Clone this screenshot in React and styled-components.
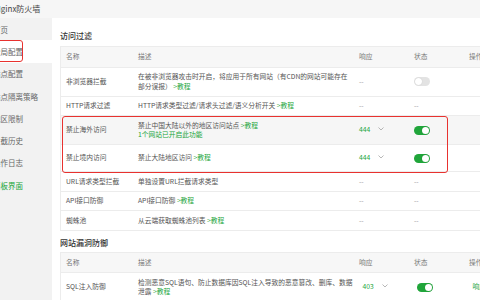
import React from "react";
import styled, { createGlobalStyle, css } from "styled-components";

const GREEN = "#20a53a";

const Global = createGlobalStyle`
  html, body { margin: 0; padding: 0; }
  body {
    width: 480px; height: 300px; overflow: hidden; background: #fff;
    font-family: "Noto Sans CJK SC", "Noto Sans", "Liberation Sans", sans-serif;
  }
`;

const Page = styled.div`
  width: 480px; height: 300px; overflow: hidden;
  display: flex; flex-direction: column;
`;

const TopBar = styled.div`
  height: 18px; flex: none; background: #f6f6f6;
  display: flex; align-items: center; padding-bottom: 1px; box-sizing: border-box;
  overflow: hidden;
`;

const Brand = styled.span`
  margin-left: -5px; font-size: 8px; color: #444; white-space: nowrap;
`;

const Body = styled.div`
  flex: 1; display: flex; min-height: 0;
`;

const Sidebar = styled.nav`
  width: 52px; flex: none; background: #f2f2f2; overflow: hidden;
  display: flex; flex-direction: column;
`;

const NavItem = styled.div`
  position: relative;
  height: 22.3px; flex: none; display: flex; align-items: center;
  font-size: 7.5px; white-space: nowrap;
  color: ${(p) => (p.$accent ? GREEN : "#666")};
  background: ${(p) => (p.$active ? "#fff" : "transparent")};
`;

const NavText = styled.span`
  margin-left: -7px;
`;

const Mark = styled.span`
  position: absolute; left: -10px; top: 0; width: 33px; height: 22px;
  border: 1.5px solid #e8322f; border-radius: 3px; pointer-events: none;
  box-sizing: border-box;
`;

const Main = styled.main`
  flex: 1; min-width: 0; overflow: hidden; background: #fff;
  padding: 12px 0 0 8px; box-sizing: border-box;
`;

const SectionTitle = styled.div`
  font-size: 8px; line-height: 12px; color: #333; font-weight: 500;
  margin: ${(p) => (p.$first ? "0 0 4px" : "6px 0 3px")};
`;

const Table = styled.div`
  width: 540px; border: 1px solid #ececec; border-bottom: none; box-sizing: border-box;
`;

const Row = styled.div`
  display: flex;
  align-items: center;
  border-bottom: 1px solid #ececec;
  box-sizing: border-box;
  background: ${(p) => (p.$shade ? "#f6f6f6" : "#fff")};
  ${(p) =>
    p.$head &&
    css`
      background: #f7f7f7;
      min-height: 20.5px;
    `}
`;

const widths = { name: 72, desc: 221, resp: 55, state: 55 };

const Cell = styled.div`
  flex: ${(p) => (p.$col && widths[p.$col] ? `0 0 ${widths[p.$col]}px` : "1 1 auto")};
  box-sizing: border-box;
  padding: 4.5px 5px;
  font-size: 6.75px; line-height: 9.5px;
  color: ${(p) => (p.$muted ? "#999" : p.$head ? "#777" : "#555")};
  white-space: nowrap;
  overflow: visible;
`;

const Link = styled.span`
  color: ${GREEN};
`;

const Group = styled.div`
  position: relative;
  &::after {
    content: "";
    position: absolute; left: 1px; top: 0; bottom: -1px; width: 386px;
    border: 1.5px solid #e8322f; border-radius: 3px;
    pointer-events: none; box-sizing: border-box;
  }
`;

const Select = styled.div`
  height: 17px; display: flex; align-items: center; gap: 8px;
  color: ${GREEN}; font-size: 6.75px;
`;

const Toggle = styled.span`
  display: inline-block; position: relative;
  width: 16px; height: 9px; border-radius: 4.5px; vertical-align: middle;
  background: ${(p) => (p.$on ? GREEN : "#e3e3e3")};
  &::after {
    content: ""; position: absolute; top: 1px;
    left: ${(p) => (p.$on ? "8px" : "1px")};
    width: 7px; height: 7px; border-radius: 50%; background: #fff;
    box-shadow: 0 0 1px rgba(0,0,0,0.2);
  }
`;

const Chevron = () => (
  <svg width="6" height="4" viewBox="0 0 6 4" style={{ marginTop: -2 }}>
    <polyline points="0.5,0.5 3,3 5.5,0.5" fill="none" stroke="#999" strokeWidth="0.7" />
  </svg>
);

const Tut = () => <Link> &gt;教程</Link>;

const nav = ["首页", "全局配置", "站点配置", "站点隔离策略", "地区限制", "拦截历史", "操作日志", "面板界面"];

const Head = () => (
  <Row $head>
    <Cell $col="name" $head>名称</Cell>
    <Cell $col="desc" $head>描述</Cell>
    <Cell $col="resp" $head>响应</Cell>
    <Cell $col="state" $head>状态</Cell>
    <Cell $head>操作</Cell>
  </Row>
);

const Plain = ({ name, children }) => (
  <Row>
    <Cell $col="name">{name}</Cell>
    <Cell $col="desc">{children}</Cell>
    <Cell $col="resp" $muted>--</Cell>
    <Cell $col="state" $muted>--</Cell>
    <Cell />
  </Row>
);

export default function App() {
  return (
    <Page>
      <Global />
      <TopBar>
        <Brand>Nginx防火墙</Brand>
      </TopBar>
      <Body>
        <Sidebar>
          {nav.map((t, i) => (
            <NavItem key={t} $active={i === 1} $accent={i === nav.length - 1}>
              <NavText>{t}</NavText>
              {i === 1 && <Mark />}
            </NavItem>
          ))}
        </Sidebar>
        <Main>
          <SectionTitle $first>访问过滤</SectionTitle>
          <Table>
            <Head />
            <Row>
              <Cell $col="name">非浏览器拦截</Cell>
              <Cell $col="desc">
                在被非浏览器攻击时开启，将应用于所有网站（有CDN的网站可能存在
                <br />
                部分误报） <Tut />
              </Cell>
              <Cell $col="resp" $muted>--</Cell>
              <Cell $col="state"><Toggle /></Cell>
              <Cell />
            </Row>
            <Plain name="HTTP请求过滤">
              HTTP请求类型过滤/请求头过滤/语义分析开关 <Tut />
            </Plain>
            <Group>
              <Row $shade>
                <Cell $col="name">禁止海外访问</Cell>
                <Cell $col="desc">
                  禁止中国大陆以外的地区访问站点 <Tut />
                  <br />
                  <Link>1个网站已开启此功能</Link>
                </Cell>
                <Cell $col="resp"><Select>444<Chevron /></Select></Cell>
                <Cell $col="state"><Toggle $on /></Cell>
                <Cell />
              </Row>
              <Row>
                <Cell $col="name">禁止境内访问</Cell>
                <Cell $col="desc">禁止大陆地区访问 <Tut /></Cell>
                <Cell $col="resp"><Select>444<Chevron /></Select></Cell>
                <Cell $col="state"><Toggle $on /></Cell>
                <Cell />
              </Row>
            </Group>
            <Plain name="URL请求类型拦截">单独设置URL拦截请求类型</Plain>
            <Plain name="API接口防御">API接口防御 <Tut /></Plain>
            <Plain name="蜘蛛池">从云端获取蜘蛛池列表 <Tut /></Plain>
          </Table>
          <SectionTitle>网站漏洞防御</SectionTitle>
          <Table>
            <Head />
            <Row>
              <Cell $col="name">SQL注入防御</Cell>
              <Cell $col="desc">
                检测恶意SQL语句、防止数据库因SQL注入导致的恶意篡改、删库、数据
                <br />
                泄露 <Tut />
              </Cell>
              <Cell $col="resp"><Select>403<Chevron /></Select></Cell>
              <Cell $col="state"><Toggle $on /></Cell>
              <Cell><Link>响应内容</Link></Cell>
            </Row>
          </Table>
        </Main>
      </Body>
    </Page>
  );
}
